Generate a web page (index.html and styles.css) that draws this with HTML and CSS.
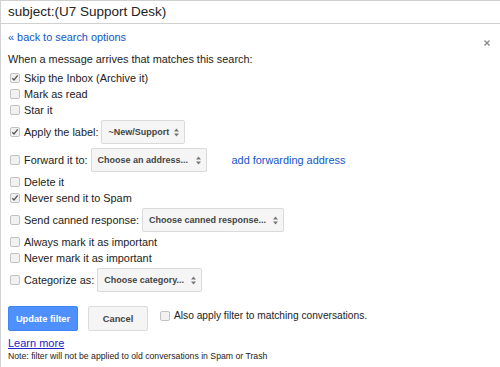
FILE: index.html
```html
<!DOCTYPE html>
<html>
<head>
    <title>Filter</title>
    <link rel="stylesheet" href="styles.css">
</head>
<body>
    <div class="filter">
        <div class="query">subject:(U7 Support Desk)</div>
        <div class="panel">
            <a class="close" href="#"><svg width="6" height="6" viewBox="0 0 6 6"><path d="M0.5 0.5 L5.5 5.5 M5.5 0.5 L0.5 5.5" stroke="#8a8a8a" stroke-width="1.4"/></svg></a>
            <a class="back" href="#">&laquo; back to search options</a>
            <p class="intro">When a message arrives that matches this search:</p>

            <div class="rules">
                <div class="row"><span class="cb on"><svg width="8" height="8" viewBox="0 0 8 8"><path d="M1.3 4.3 L3 6 L6.7 1.3" fill="none" stroke="#555" stroke-width="1.3"/></svg></span>Skip the Inbox (Archive it)</div>
                <div class="row"><span class="cb"></span>Mark as read</div>
                <div class="row"><span class="cb"></span>Star it</div>
                <div class="row tall"><span class="cb on"><svg width="8" height="8" viewBox="0 0 8 8"><path d="M1.3 4.3 L3 6 L6.7 1.3" fill="none" stroke="#555" stroke-width="1.3"/></svg></span>Apply the label:
                    <span class="select w-label">~New/Support<svg width="5" height="9" viewBox="0 0 5 9"><path d="M0 3.6 L2.5 0.6 L5 3.6Z M0 5.4 L2.5 8.4 L5 5.4Z" fill="#777"/></svg></span>
                </div>
                <div class="row tall"><span class="cb"></span>Forward it to:
                    <span class="select w-forward">Choose an address...<svg width="5" height="9" viewBox="0 0 5 9"><path d="M0 3.6 L2.5 0.6 L5 3.6Z M0 5.4 L2.5 8.4 L5 5.4Z" fill="#777"/></svg></span>
                    <a class="add" href="#">add forwarding address</a>
                </div>
                <div class="row"><span class="cb"></span>Delete it</div>
                <div class="row"><span class="cb on"><svg width="8" height="8" viewBox="0 0 8 8"><path d="M1.3 4.3 L3 6 L6.7 1.3" fill="none" stroke="#555" stroke-width="1.3"/></svg></span>Never send it to Spam</div>
                <div class="row tall"><span class="cb"></span>Send canned response:
                    <span class="select w-canned">Choose canned response...<svg width="5" height="9" viewBox="0 0 5 9"><path d="M0 3.6 L2.5 0.6 L5 3.6Z M0 5.4 L2.5 8.4 L5 5.4Z" fill="#777"/></svg></span>
                </div>
                <div class="row"><span class="cb"></span>Always mark it as important</div>
                <div class="row"><span class="cb"></span>Never mark it as important</div>
                <div class="row tall"><span class="cb"></span>Categorize as:
                    <span class="select w-category">Choose category...<svg width="5" height="9" viewBox="0 0 5 9"><path d="M0 3.6 L2.5 0.6 L5 3.6Z M0 5.4 L2.5 8.4 L5 5.4Z" fill="#777"/></svg></span>
                </div>
            </div>

            <div class="actions">
                <button class="btn primary">Update filter</button>
                <button class="btn">Cancel</button>
                <div class="also"><span class="cb"></span>Also apply filter to matching conversations.</div>
            </div>

            <a class="learn" href="#">Learn more</a>
            <p class="note">Note: filter will not be applied to old conversations in Spam or Trash</p>
        </div>
    </div>
</body>
</html>
```

FILE: styles.css
```css
body {
    margin: 0;
    background-color: white;
    font-family: "Liberation Sans", Arial, Helvetica, sans-serif;
    color: #222;
}
.filter {
    border-left: 1px solid #d0d0d0;
    min-height: 100vh;
    box-sizing: border-box;
}
.query {
    border-top: 1px solid #d0d0d0;
    border-bottom: 1px solid #d0d0d0;
    height: 22px;
    line-height: 22px;
    padding-left: 7px;
    font-size: 13.5px;
}
.panel {
    position: relative;
    padding: 0 7px;
    font-size: 10.9px;
}
.close {
    position: absolute;
    top: 11px;
    right: 10px;
    line-height: 0;
}
.back {
    display: block;
    margin-top: 5px;
    line-height: 16px;
    color: #1155cc;
    text-decoration: none;
}
.intro {
    margin: 6px 0 0;
    line-height: 16px;
}
.rules {
    margin-top: 3px;
}
.row {
    display: flex;
    align-items: center;
    height: 16px;
    white-space: nowrap;
}
.row.tall {
    height: 28px;
}
.cb {
    display: inline-flex;
    align-items: center;
    justify-content: center;
    box-sizing: border-box;
    width: 10px;
    height: 10px;
    margin: 0 4px 0 2px;
    border: 1px solid #c2c2c2;
    border-radius: 2px;
    background-color: #f1f1f1;
    flex-shrink: 0;
}
.select {
    display: inline-flex;
    align-items: center;
    justify-content: space-between;
    box-sizing: border-box;
    height: 24px;
    margin-left: 3px;
    padding: 0 5px 0 6px;
    border: 1px solid #dadada;
    border-radius: 2px;
    background-color: #f5f5f5;
    font-size: 9px;
    font-weight: bold;
    color: #444;
}
.w-label { width: 84px; }
.w-forward { width: 116px; }
.w-canned { width: 142px; }
.w-category { width: 105px; }
.add {
    margin-left: 25px;
    color: #1155cc;
    text-decoration: none;
}
.actions {
    display: flex;
    align-items: flex-start;
    gap: 10px;
    margin-top: 12px;
}
.btn {
    height: 25px;
    width: 60px;
    padding: 0;
    border: 1px solid #dcdcdc;
    border-radius: 2px;
    background-color: #f5f5f5;
    color: #444;
    font-family: "Liberation Sans", Arial, sans-serif;
    font-size: 9.3px;
    font-weight: bold;
    cursor: pointer;
}
.btn.primary {
    width: 70px;
    border-color: #3f86f4;
    background-color: #4d90fe;
    color: white;
}
.also {
    display: flex;
    align-items: center;
    margin: 2px 0 0 0;
    line-height: 16px;
    font-size: 10.2px;
}
.learn {
    display: block;
    margin-top: 4px;
    line-height: 16px;
    font-size: 11px;
    color: #2222cc;
}
.note {
    margin: 0;
    line-height: 11px;
    font-size: 8.7px;
}
```
